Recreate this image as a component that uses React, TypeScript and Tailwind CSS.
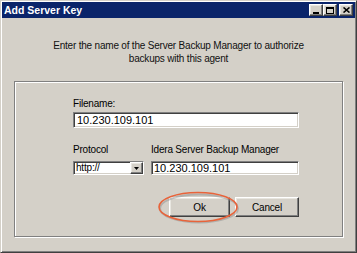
const FONT = { fontFamily: '"Liberation Sans", Arial, sans-serif' }

const raised =
  'border border-t-white border-l-white border-r-[#404040] border-b-[#404040] shadow-[inset_-1px_-1px_0_#808080,inset_1px_1px_0_#e8e6e0] bg-[#d4d0c8]'
const sunken =
  'border border-t-[#808080] border-l-[#808080] border-r-white border-b-white shadow-[inset_1px_1px_0_#404040,inset_-1px_-1px_0_#d4d0c8] bg-white'

function TitleButton({ children, className = '' }: { children: React.ReactNode; className?: string }) {
  return (
    <div className={`w-[14px] h-[12px] flex items-center justify-center ${raised} ${className}`}>
      {children}
    </div>
  )
}

export default function App() {
  return (
    <div
      className="w-[357px] h-[253px] bg-[#d4d0c8] text-[10px] tracking-[-0.2px] text-black overflow-hidden border border-t-[#d4d0c8] border-l-[#d4d0c8] border-r-[#404040] border-b-[#404040] shadow-[inset_1px_1px_0_#fff,inset_-1px_-1px_0_#808080]"
      style={FONT}
    >
      <div className="p-[1px] h-full flex flex-col">
        {/* Title bar */}
        <div className="h-[16px] bg-[#0a246a] flex items-center justify-between pl-[2px] pr-[2px]">
          <span className="text-white font-bold text-[10.5px] tracking-normal leading-none">Add Server Key</span>
          <div className="flex items-center">
            <TitleButton>
              <div className="w-[6px] h-[2px] bg-black mt-[5px] -ml-[1px]" />
            </TitleButton>
            <TitleButton>
              <div className="w-[8px] h-[7px] border border-black border-t-2" />
            </TitleButton>
            <TitleButton className="ml-[2px]">
              <svg width="7" height="6" viewBox="0 0 7 6">
                <path d="M0.5 0.5L6.5 5.5M6.5 0.5L0.5 5.5" stroke="black" strokeWidth="1.6" />
              </svg>
            </TitleButton>
          </div>
        </div>

        {/* Instructions */}
        <div className="mt-[21px] text-center leading-[13px] text-[#111]">
          <div>Enter the name of the Server Backup Manager to authorize</div>
          <div>backups with this agent</div>
        </div>

        {/* Group box */}
        <div className="relative mt-[16px] ml-[12px] w-[329px] h-[156px] border border-[#808080] shadow-[inset_1px_1px_0_#fff,1px_1px_0_#fff]">
          <div className="pl-[58px] pt-[15px] w-[284px]">
            <div className="leading-[13px]">Filename:</div>
            <div className={`mt-[2px] h-[16px] flex items-center pl-[3px] text-[11px] tracking-normal ${sunken}`}>10.230.109.101</div>

            <div className="mt-[15px] flex gap-[7px]">
              <div className="w-[71px]">
                <div className="leading-[13px]">Protocol</div>
                <div className={`mt-[5px] h-[14px] flex items-center justify-between pl-[2px] ${sunken}`}>
                  <span className="leading-none">http://</span>
                  <div className={`w-[13px] h-[12px] flex items-center justify-center ${raised}`}>
                    <svg width="5" height="3" viewBox="0 0 5 3">
                      <path d="M0 0H5L2.5 3Z" fill="black" />
                    </svg>
                  </div>
                </div>
              </div>
              <div className="flex-1">
                <div className="leading-[13px]">Idera Server Backup Manager</div>
                <div className={`mt-[5px] h-[14px] flex items-center pl-[2px] text-[11px] tracking-normal ${sunken}`}>10.230.109.101</div>
              </div>
            </div>

            <div className="mt-[22px] flex justify-end gap-[5px]">
              <div className="relative">
                <div className={`w-[61px] h-[20px] flex items-center justify-center ${raised}`}>Ok</div>
                <svg
                  className="absolute left-[-11px] top-[-6px] overflow-visible"
                  width="80"
                  height="32"
                  viewBox="0 0 80 32"
                >
                  <ellipse cx="41" cy="17.5" rx="39" ry="14" fill="none" stroke="#8a8a8a" strokeOpacity="0.45" strokeWidth="2" />
                  <ellipse cx="40" cy="16" rx="39" ry="14.5" fill="none" stroke="#e8633a" strokeWidth="1.6" />
                </svg>
              </div>
              <div className={`w-[64px] h-[20px] flex items-center justify-center ${raised}`}>Cancel</div>
            </div>
          </div>
        </div>
      </div>
    </div>
  )
}
